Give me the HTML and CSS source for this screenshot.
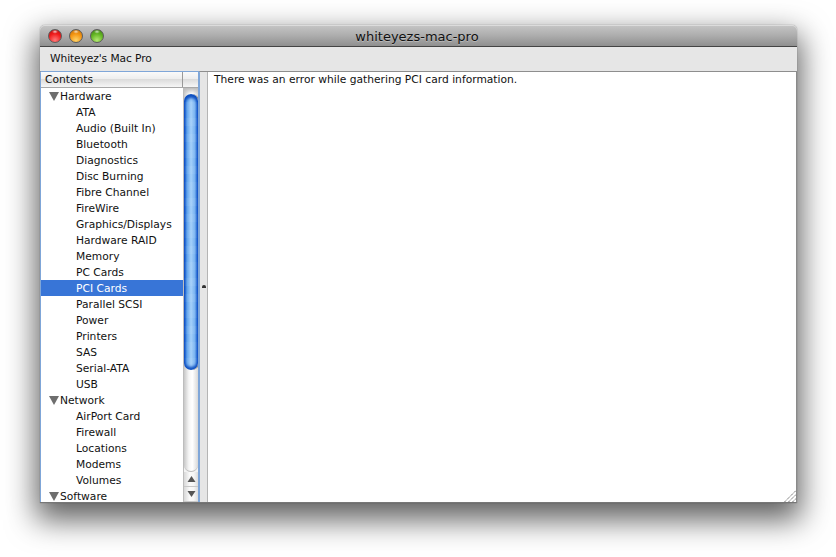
FILE: index.html
```html
<!DOCTYPE html>
<html lang="en">
<head>
<meta charset="utf-8">
<title>whiteyezs-mac-pro</title>
<link rel="stylesheet" href="styles.css">
</head>
<body>
<div class="window">
  <header class="titlebar">
    <div class="lights">
      <span class="light red"></span>
      <span class="light yellow"></span>
      <span class="light green"></span>
    </div>
    <div class="title">whiteyezs-mac-pro</div>
  </header>
  <div class="pathbar">Whiteyez's Mac Pro</div>
  <div class="main">
    <aside class="sidebar">
      <div class="tablehead">
        <div class="headcell">Contents</div>
        <div class="headcorner"></div>
      </div>
      <div class="tablebody">
        <ul class="tree">
          <li class="group"><span class="tri"></span>Hardware</li>
          <li>ATA</li>
          <li>Audio (Built In)</li>
          <li>Bluetooth</li>
          <li>Diagnostics</li>
          <li>Disc Burning</li>
          <li>Fibre Channel</li>
          <li>FireWire</li>
          <li>Graphics/Displays</li>
          <li>Hardware RAID</li>
          <li>Memory</li>
          <li>PC Cards</li>
          <li class="selected">PCI Cards</li>
          <li>Parallel SCSI</li>
          <li>Power</li>
          <li>Printers</li>
          <li>SAS</li>
          <li>Serial-ATA</li>
          <li>USB</li>
          <li class="group"><span class="tri"></span>Network</li>
          <li>AirPort Card</li>
          <li>Firewall</li>
          <li>Locations</li>
          <li>Modems</li>
          <li>Volumes</li>
          <li class="group"><span class="tri"></span>Software</li>
        </ul>
        <div class="scrollbar">
          <div class="track">
            <div class="thumb"></div>
          </div>
          <div class="arrow"><svg width="9" height="8" viewBox="0 0 9 8"><path d="M4.5 1 L8.5 7 H0.5 Z" fill="#555"/></svg></div>
          <div class="arrow"><svg width="9" height="8" viewBox="0 0 9 8"><path d="M0.5 1 H8.5 L4.5 7 Z" fill="#555"/></svg></div>
        </div>
      </div>
    </aside>
    <div class="splitter"><span class="grip"></span></div>
    <section class="content">
      <p class="message">There was an error while gathering PCI card information.</p>
      <svg class="resize" width="12" height="12" viewBox="0 0 12 12"><path d="M0.5 12 L12 0.5 M4.5 12 L12 4.5 M8.5 12 L12 8.5" stroke="#6f6f6f" stroke-width="1" stroke-dasharray="1.4 .6" fill="none"/></svg>
    </section>
  </div>
</div>
</body>
</html>
```
FILE: styles.css
```css
* { box-sizing: border-box; }
html, body { margin: 0; height: 100%; background: #fff; overflow: hidden; }
body {
  padding: 25px 39px 54px 40px;
  font-family: "DejaVu Sans", Verdana, sans-serif;
  font-size: 10.7px;
  color: #111;
}
.window {
  height: 478px;
  display: flex;
  flex-direction: column;
  border-radius: 5px 5px 0 0;
  box-shadow: 0 13px 30px 4px rgba(0,0,0,.62), 0 0 1px rgba(0,0,0,.6);
  background: #e6e6e6;
}
.titlebar {
  position: relative;
  height: 22px;
  flex: none;
  display: flex;
  align-items: center;
  justify-content: center;
  padding: 1px 3px 0 0;
  background: linear-gradient(#c6c6c6, #adadad 50%, #8f8f8f);
  border-bottom: 1px solid #444;
  border-radius: 5px 5px 0 0;
  box-shadow: inset 0 1px 0 #dcdcdc;
}
.lights {
  position: absolute;
  left: 8px;
  top: 4px;
  display: flex;
  gap: 7px;
}
.light {
  width: 14px;
  height: 14px;
  border-radius: 50%;
  border: 1px solid #5c5c5c;
}
.red {
  background:
    radial-gradient(ellipse 3px 2px at 50% 14%, rgba(255,255,255,.75), rgba(255,255,255,0)),
    radial-gradient(circle at 50% 85%, #ff7a7a, #f01c1c 55%, #b00c0c);
}
.yellow {
  background:
    radial-gradient(ellipse 3px 2px at 50% 14%, rgba(255,255,255,.7), rgba(255,255,255,0)),
    radial-gradient(circle at 50% 85%, #ffd468, #f49410 55%, #bc6a06);
}
.green {
  background:
    radial-gradient(ellipse 3px 2px at 50% 14%, rgba(255,255,255,.7), rgba(255,255,255,0)),
    radial-gradient(circle at 50% 85%, #b4ea72, #62b422 55%, #3c7c12);
}
.title {
  font-size: 13px;
  color: #111;
  text-shadow: 0 1px 0 rgba(255,255,255,.3);
}
.pathbar {
  height: 25px;
  flex: none;
  padding: 5px 0 0 10px;
  line-height: 14px;
  letter-spacing: -0.1px;
  background: #e6e6e6;
  border-bottom: 1px solid #8e8e8e;
}
.main {
  flex: 1;
  min-height: 0;
  display: flex;
  border-right: 1px solid #8a8a8a;
  border-bottom: 1px solid #777;
}
.sidebar {
  width: 160px;
  flex: none;
  display: flex;
  flex-direction: column;
  border: 2px solid #7fa6d8;
  border-left-width: 1px;
  border-bottom: 0;
  border-top-width: 1px;
  background: #fff;
  border-radius: 2px 2px 0 0;
  margin-top: -1px;
}
.tablehead {
  height: 16px;
  flex: none;
  display: flex;
  background: linear-gradient(#fafafa, #eeeeee 45%, #dcdcdc 50%, #f6f6f6);
  border-bottom: 1px solid #a8a8a8;
}
.headcell {
  flex: 1;
  padding-left: 4px;
  line-height: 16px;
  border-right: 1px solid #999;
}
.headcorner { width: 15px; flex: none; }
.tablebody {
  flex: 1;
  min-height: 0;
  display: flex;
  overflow: hidden;
}
.tree {
  list-style: none;
  margin: 0;
  padding: 0;
  flex: 1;
  min-width: 0;
}
.tree li {
  height: 16px;
  line-height: 18px;
  padding-left: 35px;
  white-space: nowrap;
}
.tree .group {
  display: flex;
  align-items: center;
  padding: 2px 0 0 8px;
  line-height: 14px;
}
.tri {
  width: 0;
  height: 0;
  margin: -2px 1px 0 0;
  border-left: 5px solid transparent;
  border-right: 5px solid transparent;
  border-top: 9px solid #6e6e6e;
}
.tree .selected {
  background: #3875d7;
  color: #fff;
}
.scrollbar {
  width: 15px;
  flex: none;
  display: flex;
  flex-direction: column;
  border-left: 1px solid #bdbdbd;
  background: #f2f2f2;
}
.track {
  flex: 1;
  min-height: 0;
  padding: 6px 0 0 0;
  background:
    linear-gradient(#bdbdbd, rgba(255,255,255,0) 6px),
    linear-gradient(to right, #c8c8c8, #f6f6f6 35%, #ffffff 60%, #d8d8d8);
  border-radius: 0 0 8px 8px;
  border-bottom: 1px solid #bbb;
}
.thumb {
  height: 276px;
  border-radius: 7px;
  background:
    repeating-linear-gradient(rgba(255,255,255,0) 0, rgba(255,255,255,0) 8px, rgba(255,255,255,.06) 8px, rgba(255,255,255,.06) 16px),
    linear-gradient(to right, #0f50c4, #5ba0ec 20%, #a4d0fa 50%, #78b2f0 78%, #1a5fd0);
  box-shadow: inset 0 -3px 3px #0d4ec0, inset 0 4px 3px #0d4ec0, 1px 0 0 #8a8a8a;
}
.arrow {
  height: 15px;
  flex: none;
  display: flex;
  align-items: center;
  justify-content: center;
  background: linear-gradient(to right, #d8d8d8, #fafafa 40%, #f6f6f6 70%, #dcdcdc);
  border-bottom: 1px solid #c8c8c8;
}
.splitter {
  width: 8px;
  flex: none;
  position: relative;
  background: #e6e6e6;
  border-right: 1px solid #b5b5b5;
}
.grip {
  position: absolute;
  left: 2px;
  top: 213px;
  width: 4px;
  height: 3px;
  background: #333;
  border-radius: 2px 2px 0 0;
}
.content {
  flex: 1;
  position: relative;
  background: #fff;
  padding: 1px 6px;
}
.message {
  margin: 0;
  line-height: 14px;
}
.resize {
  position: absolute;
  right: 0;
  bottom: 0;
}
```
